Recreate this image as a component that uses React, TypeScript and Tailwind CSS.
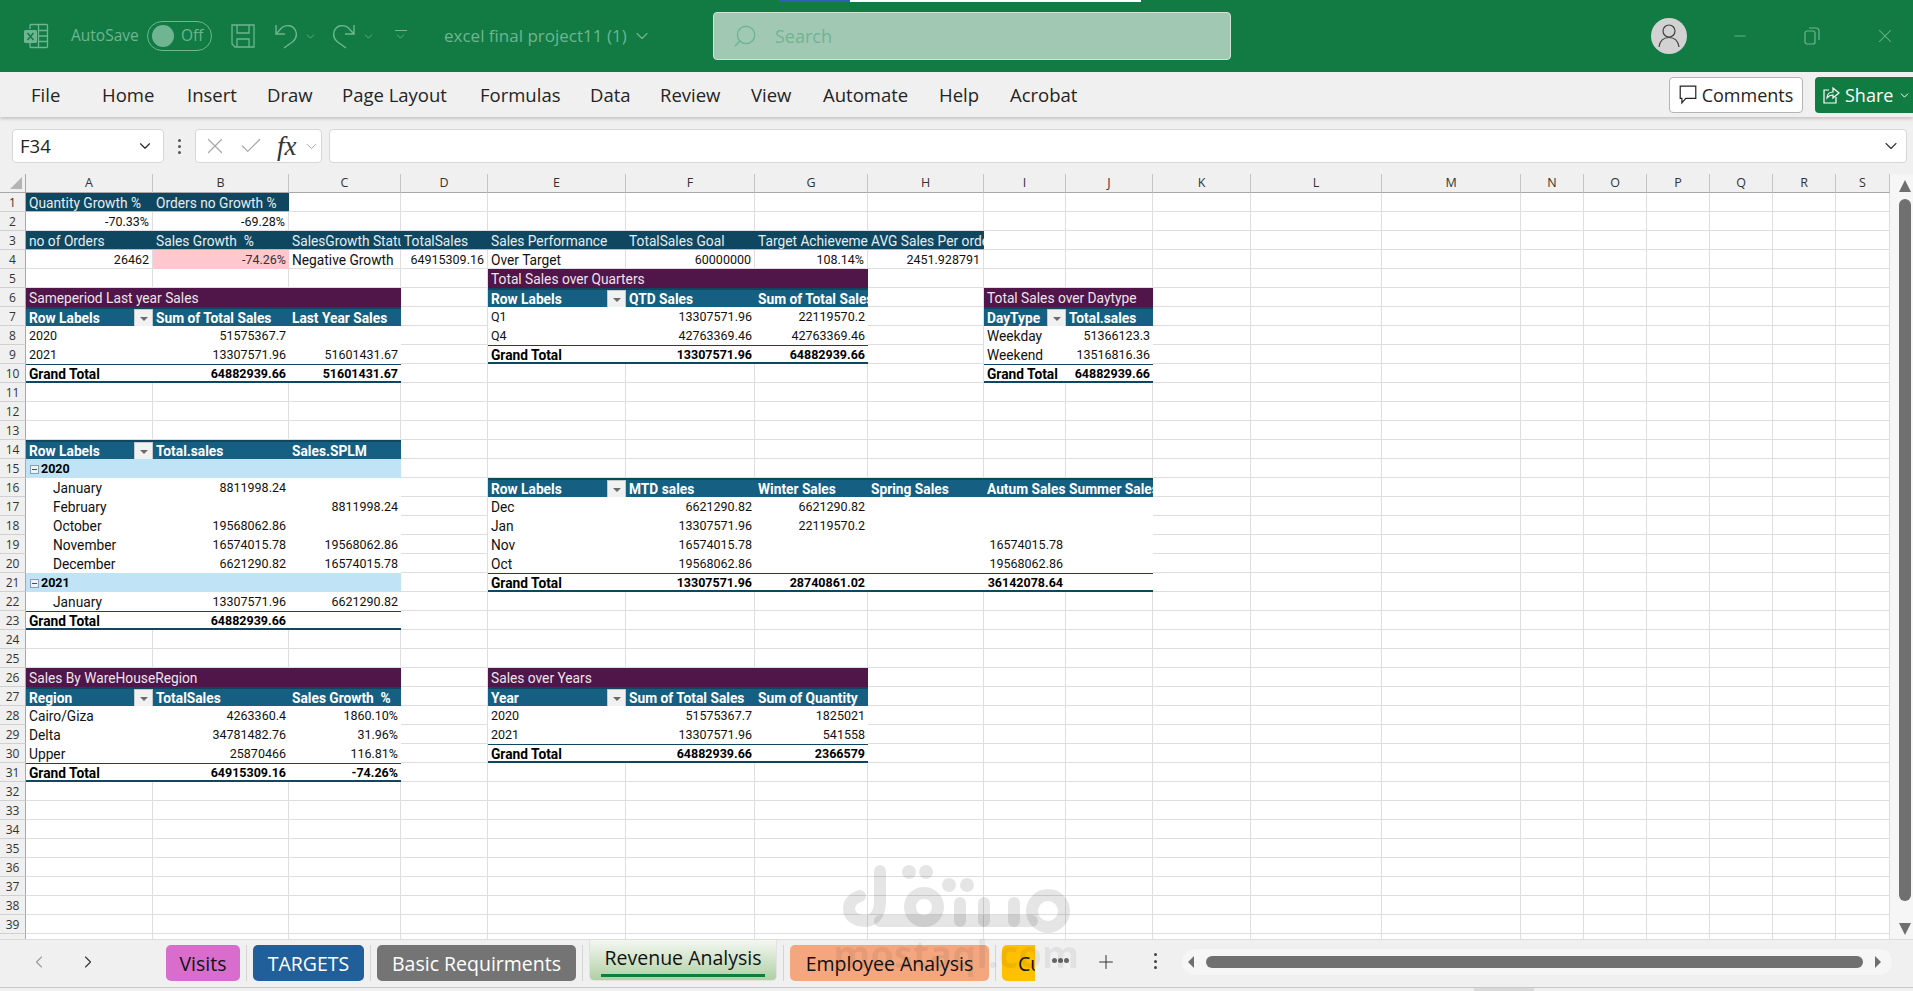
import React from 'react';
import { ChevronDown, ChevronLeft, ChevronRight, Plus, X, Check, Minus, Search } from 'lucide-react';

type Kind = 'title' | 'purple' | 'head' | 'group' | 'body' | 'total' | 'kpi' | 'pink';
type Cell = { text: string; kind: Kind; left?: boolean; indent?: boolean; filter?: boolean; toggle?: boolean };

const columns = ['A', 'B', 'C', 'D', 'E', 'F', 'G', 'H', 'I', 'J', 'K', 'L', 'M', 'N', 'O', 'P', 'Q', 'R', 'S'];
const cells: Record<string, Cell> = {};

// writes a run of cells starting at a column, first one of a pivot row is always a label
const put = (col: string, row: number, values: string[], kind: Kind) => {
  const start = columns.indexOf(col);
  values.forEach((text, i) => {
    const pivot = kind === 'body' || kind === 'total' || kind === 'group';
    const isNumber = /^-?[\d.]+%?$/.test(text);
    cells[columns[start + i] + row] = {
      text,
      kind,
      left: !isNumber || (pivot && i === 0),
      filter: kind === 'head' && i === 0,
      toggle: kind === 'group' && i === 0,
    };
  });
};

put('A', 1, ['Quantity Growth %', 'Orders no Growth %'], 'title');
put('A', 2, ['-70.33%', '-69.28%'], 'kpi');
put('A', 3, ['no of Orders', 'Sales Growth  %', 'SalesGrowth Status', 'TotalSales', 'Sales Performance', 'TotalSales Goal', 'Target Achievement', 'AVG Sales Per order'], 'title');
put('A', 4, ['26462'], 'kpi');
put('B', 4, ['-74.26%'], 'pink');
put('C', 4, ['Negative Growth', '64915309.16', 'Over Target', '60000000', '108.14%', '2451.928791'], 'kpi');

put('E', 5, ['Total Sales over Quarters', '', ''], 'purple');
put('E', 6, ['Row Labels', 'QTD Sales', 'Sum of Total Sales'], 'head');
put('E', 7, ['Q1', '13307571.96', '22119570.2'], 'body');
put('E', 8, ['Q4', '42763369.46', '42763369.46'], 'body');
put('E', 9, ['Grand Total', '13307571.96', '64882939.66'], 'total');

put('A', 6, ['Sameperiod Last year Sales', '', ''], 'purple');
put('A', 7, ['Row Labels', 'Sum of Total Sales', 'Last Year Sales'], 'head');
put('A', 8, ['2020', '51575367.7', ''], 'body');
put('A', 9, ['2021', '13307571.96', '51601431.67'], 'body');
put('A', 10, ['Grand Total', '64882939.66', '51601431.67'], 'total');

put('I', 6, ['Total Sales over Daytype', ''], 'purple');
put('I', 7, ['DayType', 'Total.sales'], 'head');
put('I', 8, ['Weekday', '51366123.3'], 'body');
put('I', 9, ['Weekend', '13516816.36'], 'body');
put('I', 10, ['Grand Total', '64882939.66'], 'total');

put('A', 14, ['Row Labels', 'Total.sales', 'Sales.SPLM'], 'head');
put('A', 15, ['2020', '', ''], 'group');
put('A', 16, ['January', '8811998.24', ''], 'body');
put('A', 17, ['February', '', '8811998.24'], 'body');
put('A', 18, ['October', '19568062.86', ''], 'body');
put('A', 19, ['November', '16574015.78', '19568062.86'], 'body');
put('A', 20, ['December', '6621290.82', '16574015.78'], 'body');
put('A', 21, ['2021', '', ''], 'group');
put('A', 22, ['January', '13307571.96', '6621290.82'], 'body');
put('A', 23, ['Grand Total', '64882939.66', ''], 'total');
[16, 17, 18, 19, 20, 22].forEach((r) => (cells['A' + r].indent = true));

put('E', 16, ['Row Labels', 'MTD sales', 'Winter Sales', 'Spring Sales', 'Autum Sales', 'Summer Sales'], 'head');
put('E', 17, ['Dec', '6621290.82', '6621290.82', '', '', ''], 'body');
put('E', 18, ['Jan', '13307571.96', '22119570.2', '', '', ''], 'body');
put('E', 19, ['Nov', '16574015.78', '', '', '16574015.78', ''], 'body');
put('E', 20, ['Oct', '19568062.86', '', '', '19568062.86', ''], 'body');
put('E', 21, ['Grand Total', '13307571.96', '28740861.02', '', '36142078.64', ''], 'total');

put('A', 26, ['Sales By WareHouseRegion', '', ''], 'purple');
put('A', 27, ['Region', 'TotalSales', 'Sales Growth  %'], 'head');
put('A', 28, ['Cairo/Giza', '4263360.4', '1860.10%'], 'body');
put('A', 29, ['Delta', '34781482.76', '31.96%'], 'body');
put('A', 30, ['Upper', '25870466', '116.81%'], 'body');
put('A', 31, ['Grand Total', '64915309.16', '-74.26%'], 'total');

put('E', 26, ['Sales over Years', '', ''], 'purple');
put('E', 27, ['Year', 'Sum of Total Sales', 'Sum of Quantity'], 'head');
put('E', 28, ['2020', '51575367.7', '1825021'], 'body');
put('E', 29, ['2021', '13307571.96', '541558'], 'body');
put('E', 30, ['Grand Total', '64882939.66', '2366579'], 'total');

const kindClass: Record<Kind, string> = {
  title: 'bg-[#0f4761] text-[#e6edf1] border-b border-b-[#83cbeb]',
  purple: 'bg-[#501549] text-[#eee4ec]',
  head: 'bg-[#156082] text-white font-bold border-t-2 border-t-[#0f4761]',
  group: 'bg-[#c0e4f5] text-black font-bold',
  body: 'bg-white text-[#111]',
  total: 'bg-white text-black font-bold border-t border-t-[#0f4761] border-b-2 border-b-[#0f4761]',
  kpi: 'bg-white text-[#111] border-r border-b border-[#dedede]',
  pink: 'bg-[#ffc7ce] text-[#333]',
};

const SheetCell = ({ cell }: { cell?: Cell }) => {
  if (!cell) return <div className="border-r border-b border-[#dedede] bg-white" />;
  // band titles run on over the empty cells beside them, everything else is clipped
  const spills = (cell.kind === 'purple' || cell.kind === 'group') && cell.text !== '';
  const hasDigit = /\d/.test(cell.text);
  return (
    <div
      className={`relative flex items-center whitespace-pre px-[3px] pt-[2px] ${kindClass[cell.kind]} ${spills ? 'z-10 overflow-visible' : 'overflow-hidden'} ${hasDigit ? 'text-[12.5px]' : 'text-[13.75px]'} ${cell.left ? 'justify-start' : 'justify-end'} ${cell.indent ? 'pl-[27px]' : ''}`}
    >
      {cell.toggle && (
        <span className="mr-[2px] ml-[1px] flex h-[9px] w-[9px] shrink-0 items-center justify-center border border-[#8f9bb3] bg-[#eef3f8]">
          <span className="h-px w-[5px] bg-[#39507a]" />
        </span>
      )}
      {cell.text}
      {cell.filter && (
        <span className="absolute top-0 right-0 flex h-[19px] w-[19px] items-center justify-center border border-[#c8c8c8] bg-[#f1f1f1]">
          <span className="h-0 w-0 border-x-[4px] border-t-[4px] border-x-transparent border-t-[#6a6a6a]" />
        </span>
      )}
    </div>
  );
};

const SheetGrid = () => (
  <div className="grid grid-cols-[26px_127px_136px_112px_87px_138px_129px_113px_116px_82px_87px_98px_131px_139px_63px_63px_63px_63px_63px_54px] auto-rows-[19px] font-['Roboto',sans-serif] text-[12.5px]">
    <div className="flex items-end justify-end border-r border-b border-[#a8a8a8] bg-[#f0f0f0] pr-[3px] pb-[3px]">
      <span className="h-0 w-0 border-b-[12px] border-l-[12px] border-b-[#b4b4b4] border-l-transparent" />
    </div>
    {columns.map((c) => (
      <div
        key={c}
        className="flex items-center justify-center border-r border-b border-r-[#c4c4c4] border-b-[#a8a8a8] bg-[#f0f0f0] pt-[1px] font-['Open_Sans',sans-serif] text-[12.5px] text-[#333]"
      >
        {c}
      </div>
    ))}
    {Array.from({ length: 40 }, (_, i) => i + 1).map((r) => (
      <React.Fragment key={r}>
        <div className="flex items-center justify-center border-r border-b border-r-[#a8a8a8] border-b-[#d0d0d0] bg-[#f0f0f0] pt-[1px] font-['Open_Sans',sans-serif] text-[12px] text-[#333]">
          {r < 40 ? r : ''}
        </div>
        {columns.map((c) => (
          <SheetCell key={c + r} cell={cells[c + r]} />
        ))}
      </React.Fragment>
    ))}
  </div>
);

const faded = '#6fb592';

const ExcelLogo = () => (
  <svg width="26" height="26" viewBox="0 0 26 26" fill="none" stroke={faded} strokeWidth="1.3">
    <path d="M7 6V2.5a1 1 0 0 1 1-1h15.5a1 1 0 0 1 1 1v21a1 1 0 0 1-1 1H8a1 1 0 0 1-1-1V20" />
    <path d="M15.5 1.5V24.5M15.5 7.5H24.5M15.5 13H24.5M15.5 18.5H24.5" />
    <rect x="1" y="7" width="13" height="13" rx="1.5" fill={faded} stroke="none" />
    <path d="M4.5 10L10.5 17M10.5 10L4.5 17" stroke="#117b43" strokeWidth="1.5" />
  </svg>
);

const SaveIcon = () => (
  <svg width="24" height="24" viewBox="0 0 24 24" fill="none" stroke={faded} strokeWidth="1.3">
    <path d="M1 1H23V23H4L1 20Z" />
    <path d="M6 1V9H18V1M6 23V15H18V23" />
  </svg>
);

const UndoIcon = () => (
  <svg width="24" height="26" viewBox="0 0 24 26" fill="none" stroke={faded} strokeWidth="1.4">
    <path d="M2 2V11H11" />
    <path d="M2 11L8 4.5C12 1.5 19 2 21.5 7.5C23.5 12 22 15.5 19 18.5L10 25" />
  </svg>
);

const RedoIcon = () => (
  <svg width="24" height="26" viewBox="0 0 24 26" fill="none" stroke={faded} strokeWidth="1.4">
    <path d="M22 2V11H13" />
    <path d="M22 11L16 4.5C12 1.5 5 2 2.5 7.5C0.5 12 2 15.5 5 18.5L14 25" />
  </svg>
);

const TitleBar = () => (
  <div className="relative flex h-[72px] shrink-0 items-center bg-[#117b43] font-['Open_Sans',sans-serif] text-[#6fb592]">
    <div className="absolute top-0 left-[779px] flex h-[2px]">
      <span className="w-[71px] bg-[#2b62b5]" />
      <span className="w-[291px] bg-white" />
    </div>
    <div className="flex w-[713px] shrink-0 items-center pl-[23px]">
      <ExcelLogo />
      <span className="ml-[22px] w-[66px] text-[15.5px]">AutoSave</span>
      <div className="ml-[10px] flex h-[30px] w-[65px] items-center rounded-full border border-[#6fb592] pl-[4px]">
        <span className="h-[22px] w-[22px] rounded-full bg-[#6fb592]" />
        <span className="ml-[7px] text-[15.5px]">Off</span>
      </div>
      <span className="ml-[19px] flex"><SaveIcon /></span>
      <span className="ml-[19px] flex"><UndoIcon /></span>
      <ChevronDown className="ml-[6px]" size={13} strokeWidth={1.5} />
      <span className="ml-[15px] flex"><RedoIcon /></span>
      <ChevronDown className="ml-[6px]" size={13} strokeWidth={1.5} />
      <span className="ml-[19px] flex flex-col items-center">
        <span className="h-px w-[12px] bg-[#6fb592]" />
        <ChevronDown className="-mt-[1px]" size={13} strokeWidth={1.5} />
      </span>
      <span className="ml-[37px] w-[186px] whitespace-nowrap text-[17px]">excel final project11 (1)</span>
      <ChevronDown className="ml-[2px]" size={20} strokeWidth={1.4} />
    </div>
    <div className="flex h-[48px] w-[518px] shrink-0 items-center rounded-[4px] border border-[#d2e4da] bg-[#a1c8b2] pl-[18px] text-[18px] text-[#6fb592]">
      <Search className="-scale-x-100" size={26} strokeWidth={1.3} />
      <span className="ml-[17px]">Search</span>
    </div>
    <div className="flex flex-1 items-center justify-end pr-[17px]">
      <div className="flex h-[36px] w-[36px] items-center justify-center rounded-full bg-[#d2d2d2]">
        <svg width="24" height="26" viewBox="0 0 24 26" fill="none" stroke="#404040" strokeWidth="1.2">
          <circle cx="12" cy="8" r="6" />
          <path d="M2 24C3 17 7 14.5 12 14.5C17 14.5 21 17 22 24" />
        </svg>
      </div>
      <Minus className="ml-[44px]" size={18} strokeWidth={1.2} />
      <svg className="ml-[55px]" width="16" height="18" viewBox="0 0 16 18" fill="none" stroke={faded} strokeWidth="1.2">
        <rect x="1" y="4" width="10" height="13" rx="2" />
        <path d="M5 1H12C14 1 15 2 15 4V13" />
      </svg>
      <X className="ml-[54px]" size={22} strokeWidth={1.1} />
    </div>
  </div>
);

const ribbonTabs = [
  ['File', 'w-[71px]'],
  ['Home', 'w-[85px]'],
  ['Insert', 'w-[80px]'],
  ['Draw', 'w-[75px]'],
  ['Page Layout', 'w-[138px]'],
  ['Formulas', 'w-[110px]'],
  ['Data', 'w-[70px]'],
  ['Review', 'w-[91px]'],
  ['View', 'w-[72px]'],
  ['Automate', 'w-[116px]'],
  ['Help', 'w-[71px]'],
  ['Acrobat', 'w-[80px]'],
];

const RibbonTabs = () => (
  <div className="relative z-20 flex h-[45px] shrink-0 items-center bg-[#f0f0f0] pt-[1px] pl-[31px] font-['Open_Sans',sans-serif] text-[18.5px] text-[#242424] shadow-[0_2px_3px_rgba(0,0,0,0.18)]">
    {ribbonTabs.map(([label, width]) => (
      <span key={label} className={`whitespace-nowrap ${width}`}>
        {label}
      </span>
    ))}
    <div className="ml-auto flex items-center gap-[12px]">
      <div className="flex h-[36px] w-[134px] items-center justify-center gap-[5px] rounded-[4px] border border-[#b5b5b5] bg-white text-[18px]">
        <svg width="18" height="20" viewBox="0 0 16 18" fill="none" stroke="#242424" strokeWidth="1.1">
          <path d="M1 1H15V12H6L2.5 16V12H1Z" />
        </svg>
        Comments
      </div>
      <div className="flex h-[36px] w-[98px] items-center gap-[5px] rounded-l-[4px] bg-[#107c41] pl-[7px] text-[18px] text-white">
        <svg width="18" height="18" viewBox="0 0 18 18" fill="none" stroke="white" strokeWidth="1.2">
          <path d="M7 4H2V17H14V11" />
          <path d="M5 12C5 8 8 6 11 6V2L17 7L11 12V9C8.5 9 6.5 10 5 12Z" />
        </svg>
        Share
        <ChevronDown className="shrink-0" size={13} strokeWidth={1.8} />
      </div>
    </div>
  </div>
);

const FormulaBar = () => (
  <div className="flex h-[57px] shrink-0 items-start gap-0 bg-[#f0f0f0] pt-[12px] pl-[12px] font-['Open_Sans',sans-serif]">
    <div className="flex h-[34px] w-[152px] items-center justify-between rounded-[4px] border border-[#d6d6d6] bg-white pr-[9px] pl-[7px] text-[18.5px] text-[#242424]">
      F34
      <ChevronDown size={18} strokeWidth={1.5} />
    </div>
    <div className="flex h-[34px] w-[31px] flex-col items-center justify-center gap-[3px]">
      <span className="h-[3px] w-[3px] rounded-full bg-[#555]" />
      <span className="h-[3px] w-[3px] rounded-full bg-[#555]" />
      <span className="h-[3px] w-[3px] rounded-full bg-[#555]" />
    </div>
    <div className="flex h-[34px] w-[127px] items-center rounded-[4px] border border-[#d6d6d6] bg-white pl-[6px] text-[#a8a8a8]">
      <X size={26} strokeWidth={1.1} />
      <Check className="ml-[10px]" size={26} strokeWidth={1.1} />
      <span className="ml-[13px] font-['Liberation_Serif',serif] text-[27px] text-[#333] italic">fx</span>
      <ChevronDown className="ml-[6px]" size={17} strokeWidth={1.4} />
    </div>
    <div className="ml-[7px] flex h-[34px] w-[1578px] items-center justify-end rounded-[4px] border border-[#d6d6d6] bg-white pr-[5px]">
      <ChevronDown size={20} strokeWidth={1.3} className="text-[#333]" />
    </div>
  </div>
);

const VerticalScroll = () => (
  <div className="flex w-[23px] flex-col items-center bg-[#f5f6f5] pt-[6px] pl-[6px]">
    <span className="h-0 w-0 border-x-[6px] border-b-[12px] border-x-transparent border-b-[#6f6f6f]" />
    <span className="mt-[7px] h-[702px] w-[12px] rounded-full bg-[#707070]" />
    <span className="mt-[22px] h-0 w-0 border-x-[6px] border-t-[12px] border-x-transparent border-t-[#6f6f6f]" />
  </div>
);

const Separator = () => <span className="mx-[6px] h-[36px] w-px bg-[#d4d4d4]" />;

const SheetTabs = () => (
  <div className="flex h-[48px] shrink-0 items-start border-t border-[#dcdcdc] bg-[#f0f0f0] pl-[29px] font-['Open_Sans',sans-serif] text-[19.5px]">
    <ChevronLeft className="mt-[12px] text-[#9a9a9a]" size={20} strokeWidth={1.3} />
    <ChevronRight className="mt-[12px] ml-[29px] text-[#333]" size={20} strokeWidth={1.3} />
    <div className="mt-[5px] ml-[68px] flex h-[36px] w-[74px] items-center justify-center rounded-[5px] bg-[#d86dcd] pt-[1px] text-[#111]">Visits</div>
    <span className="mt-[5px] flex"><Separator /></span>
    <div className="mt-[5px] flex h-[36px] w-[111px] items-center justify-center rounded-[5px] bg-[#215f9a] pt-[1px] text-white">TARGETS</div>
    <span className="mt-[5px] flex"><Separator /></span>
    <div className="mt-[5px] flex h-[36px] w-[199px] items-center justify-center rounded-[5px] bg-[#747474] pt-[1px] whitespace-nowrap text-white">Basic Requirments</div>
    <span className="mt-[5px] flex"><Separator /></span>
    <div className="flex h-[41px] w-[188px] flex-col items-center justify-start rounded-b-[5px] border-x border-b border-[#e2e2e2] bg-gradient-to-b from-[#f4f7f2] to-[#afd0a4] pt-[4px] leading-[28px] whitespace-nowrap text-[#111]">
      Revenue Analysis
      <span className="mt-[2px] h-[3px] w-[164px] bg-[#107c41]" />
    </div>
    <span className="mt-[5px] flex"><Separator /></span>
    <div className="mt-[5px] flex h-[36px] w-[199px] items-center justify-center rounded-[5px] bg-[#f4a77f] pt-[1px] whitespace-nowrap text-[#111]">Employee Analysis</div>
    <span className="mt-[5px] flex"><Separator /></span>
    <div className="mt-[5px] flex h-[36px] w-[33px] items-center overflow-hidden rounded-l-[5px] bg-[#ffc000] pt-[1px] pl-[16px] text-[#111]">Customers</div>
    <div className="mt-[18px] ml-[17px] flex w-[17px] gap-[1px]">
      <span className="h-[5px] w-[5px] rounded-full bg-[#666]" />
      <span className="h-[5px] w-[5px] rounded-full bg-[#666]" />
      <span className="h-[5px] w-[5px] rounded-full bg-[#666]" />
    </div>
    <Plus className="mt-[11px] ml-[26px] text-[#333]" size={22} strokeWidth={1.1} />
    <div className="mt-[13px] ml-[37px] flex h-[16px] flex-col items-center justify-between">
      <span className="h-[3px] w-[3px] rounded-full bg-[#444]" />
      <span className="h-[3px] w-[3px] rounded-full bg-[#444]" />
      <span className="h-[3px] w-[3px] rounded-full bg-[#444]" />
    </div>
    <div className="mt-[9px] ml-[25px] flex h-[26px] w-[710px] items-center rounded-full bg-[#f5f6f5] px-[6px]">
      <span className="h-0 w-0 border-y-[6px] border-r-[6px] border-y-transparent border-r-[#6f6f6f]" />
      <span className="ml-[12px] h-[12px] w-[657px] rounded-full bg-[#707070]" />
      <span className="ml-[12px] h-0 w-0 border-y-[6px] border-l-[6px] border-y-transparent border-l-[#6f6f6f]" />
    </div>
  </div>
);

// site logo that sits over the sheet
const Watermark = () => (
  <div className="pointer-events-none absolute top-[865px] left-[842px] z-30 flex w-[228px] flex-col items-center">
    <svg width="228" height="68" viewBox="0 0 228 68" fill="none" stroke="#000" strokeOpacity="0.1" strokeWidth="12" strokeLinecap="round">
      <path d="M38 6V36C38 50 32 56 22 56C14 56 7 51 7 44C7 37 12 33 18 31" />
      <path d="M38 56H190" />
      <circle cx="206" cy="46" r="16" />
      <circle cx="82" cy="42" r="14" />
      <path d="M118 38V56M142 38V56M172 38V56" />
      <g fill="#000" fillOpacity="0.1" stroke="none">
        <circle cx="67" cy="7" r="7" />
        <circle cx="84" cy="7" r="7" />
        <circle cx="107" cy="20" r="7" />
        <circle cx="125" cy="20" r="7" />
      </g>
    </svg>
    <span className="mt-[1px] font-['Open_Sans',sans-serif] text-[38px] leading-[38px] font-bold text-black/[0.07]">mostaql.com</span>
  </div>
);

const App = () => {
  return (
    <div className="relative flex h-[991px] w-[1913px] flex-col overflow-hidden bg-[#f0f0f0]">
      <TitleBar />
      <RibbonTabs />
      <FormulaBar />
      <div className="flex h-[765px] shrink-0 overflow-hidden">
        <SheetGrid />
        <VerticalScroll />
      </div>
      <SheetTabs />
      <div className="flex h-[4px] shrink-0 border-t border-[#c8c8c8] pl-[1474px]">
        <span className="w-[60px] bg-[#d9d9d9]" />
      </div>
      <Watermark />
    </div>
  );
};

export default App;
